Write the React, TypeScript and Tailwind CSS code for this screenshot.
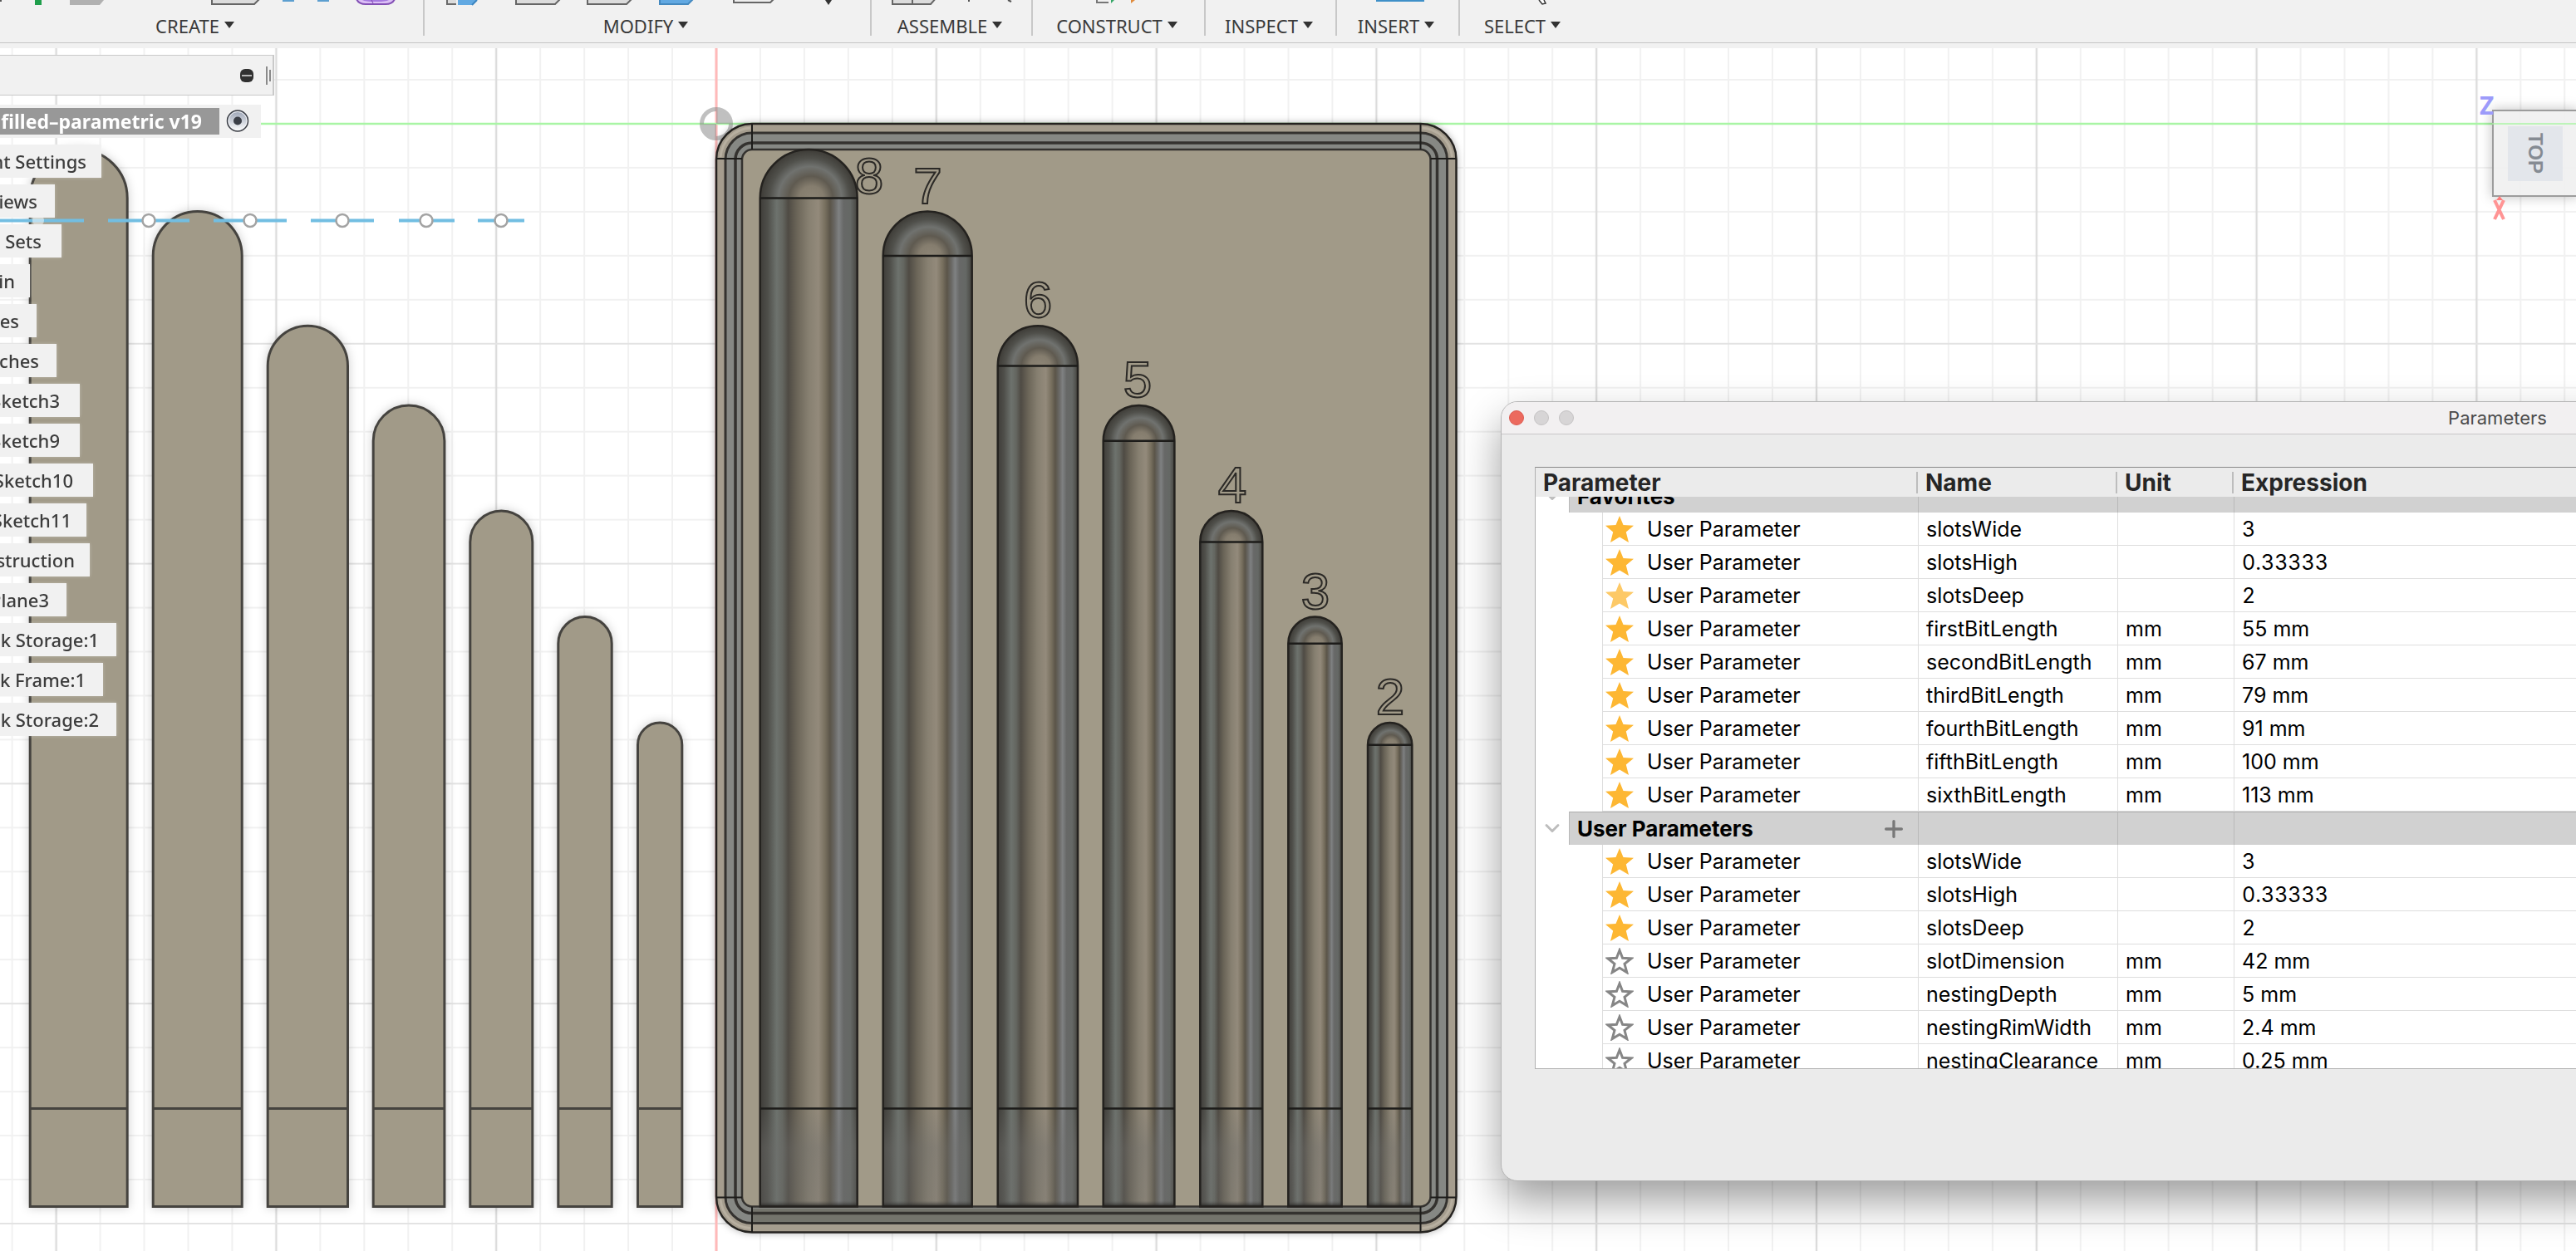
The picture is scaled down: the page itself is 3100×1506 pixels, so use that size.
import { useEffect, useRef, useState } from 'react';
import type { ReactNode } from 'react';
import { ChevronDown, Plus } from 'lucide-react';

interface Parameter {
  name: string;
  unit: string;
  expression: string;
  star: 'on' | 'faded' | 'off';
}

interface Slot {
  label: string;
  labelX: number;
  x: number;
  width: number;
  top: number;
}

const favorites: Parameter[] = [
  { name: 'slotsWide', unit: '', expression: '3', star: 'on' },
  { name: 'slotsHigh', unit: '', expression: '0.33333', star: 'on' },
  { name: 'slotsDeep', unit: '', expression: '2', star: 'faded' },
  { name: 'firstBitLength', unit: 'mm', expression: '55 mm', star: 'on' },
  { name: 'secondBitLength', unit: 'mm', expression: '67 mm', star: 'on' },
  { name: 'thirdBitLength', unit: 'mm', expression: '79 mm', star: 'on' },
  { name: 'fourthBitLength', unit: 'mm', expression: '91 mm', star: 'on' },
  { name: 'fifthBitLength', unit: 'mm', expression: '100 mm', star: 'on' },
  { name: 'sixthBitLength', unit: 'mm', expression: '113 mm', star: 'on' },
];

const userParameters: Parameter[] = [
  { name: 'slotsWide', unit: '', expression: '3', star: 'on' },
  { name: 'slotsHigh', unit: '', expression: '0.33333', star: 'on' },
  { name: 'slotsDeep', unit: '', expression: '2', star: 'on' },
  { name: 'slotDimension', unit: 'mm', expression: '42 mm', star: 'off' },
  { name: 'nestingDepth', unit: 'mm', expression: '5 mm', star: 'off' },
  { name: 'nestingRimWidth', unit: 'mm', expression: '2.4 mm', star: 'off' },
  { name: 'nestingClearance', unit: 'mm', expression: '0.25 mm', star: 'off' },
];

const treeItems = [
  { label: 'nt Settings', box: 'w-[122px] pr-[18px]' },
  { label: 'iews', box: 'w-[66px] pr-[21px]' },
  { label: 'Sets', box: 'w-[74px] pr-[24px]' },
  { label: 'in', box: 'w-[36px] pr-[18px]' },
  { label: 'es', box: 'w-[44px] pr-[21px]' },
  { label: 'ches', box: 'w-[68px] pr-[21px]' },
  { label: 'Sketch3', box: 'w-[96px] pr-[24px]' },
  { label: 'Sketch9', box: 'w-[96px] pr-[24px]' },
  { label: 'Sketch10', box: 'w-[112px] pr-[24px]' },
  { label: 'Sketch11', box: 'w-[104px] pr-[18px]' },
  { label: 'struction', box: 'w-[108px] pr-[18px]' },
  { label: 'Plane3', box: 'w-[80px] pr-[21px]' },
  { label: 'k Storage:1', box: 'w-[140px] pr-[21px]' },
  { label: 'k Frame:1', box: 'w-[124px] pr-[21px]' },
  { label: 'k Storage:2', box: 'w-[140px] pr-[21px]' },
];

// Model units are pixels from the origin marker
const slots: Slot[] = [
  { label: '8', labelX: 184, x: 52.7, width: 117, top: 31 },
  { label: '7', labelX: 254.5, x: 200.7, width: 107, top: 105.5 },
  { label: '6', labelX: 387, x: 338.7, width: 96.3, top: 243.3 },
  { label: '5', labelX: 507, x: 465.7, width: 85.7, top: 339 },
  { label: '4', labelX: 621, x: 582.3, width: 75, top: 466 },
  { label: '3', labelX: 721, x: 688.3, width: 64.4, top: 593.5 },
  { label: '2', labelX: 811, x: 784, width: 53.3, top: 721 },
];

const SLOT_BOTTOM = 1303.5;
const SLOT_FOOT = 1185.5;
const BODY_OFFSET = -878.5;

const dashes = [
  [-862, -761],
  [-732, -634],
  [-605, -517],
  [-488, -412],
  [-382, -315],
  [-287, -231],
];

function slotPath({ x, width, top }: Slot) {
  const r = width / 2;
  return `M${x} ${SLOT_BOTTOM}V${top + r}A${r} ${r} 0 0 1 ${x + width} ${top + r}V${SLOT_BOTTOM}Z`;
}

function ToolGroup({ label, className, children }: { label: string; className: string; children?: ReactNode }) {
  return (
    <div className={`flex h-[43px] shrink-0 flex-col border-[#c8c8c8] ${className}`}>
      <svg className="h-2 w-full" aria-hidden="true">
        {children}
      </svg>
      <button className="flex flex-1 items-end justify-center gap-[6px] pr-1 text-[22px] leading-6 text-[#3a3a3a]">
        {label}
        <svg className="mb-[9px] h-2 w-3" viewBox="0 0 12 8" aria-hidden="true">
          <path d="M0 0H12L6 8Z" fill="#333" />
        </svg>
      </button>
    </div>
  );
}

function Toolbar() {
  return (
    <header className="relative z-20 h-[58px] overflow-hidden bg-[#f1f1f1]">
      <div className="flex h-[52px] border-b border-[#c6c6c6]">
        <ToolGroup label="CREATE" className="-ml-9 w-[547px] border-r-2">
          <rect x="36" width="2" height="2" fill="#555" />
          <rect x="78" width="8" height="6" fill="#1f9e4b" />
          <path d="M120 0H161L156 6H120Z" fill="#b1b1b1" />
          <path d="M291 -3V5H342L350 -3" fill="#dcdcdc" stroke="#666" strokeWidth="2" />
          <path d="M376 0H390V2H376ZM418 0H432V2H418Z" fill="#5c9fd0" />
          <path d="M464 -4Q466 5 476 5H500Q510 5 512 -4" fill="#dcc0f6" stroke="#8350b5" strokeWidth="2" />
          <path d="M472 0Q476 2 486 2H490Q500 2 504 0Z" fill="#a679e0" />
          <path d="M483 0L485 4" stroke="#7c49b0" />
        </ToolGroup>
        <ToolGroup label="MODIFY" className="w-[538px] border-r-2">
          <path d="M27 -3V5H38" fill="none" stroke="#6b6b6b" strokeWidth="2" />
          <rect x="28" width="10" height="4" fill="#dcdcdc" />
          <path d="M40 0H63L57 6H40Z" fill="#62a9e2" />
          <path d="M57 6L63 0" stroke="#3a85c0" strokeWidth="2" />
          <path d="M110 -3V5H157L165 -3M196 -3V5H243L251 -3" fill="#dcdcdc" stroke="#666" strokeWidth="2" />
          <path d="M283 -3V5H317L325 -3" fill="#62a9e2" stroke="#4489bf" strokeWidth="2" />
          <path d="M372 -3V3H416L422 -3" fill="#eee" stroke="#666" strokeWidth="2" />
          <path d="M482 0H490L486 6Z" fill="#333" />
        </ToolGroup>
        <ToolGroup label="ASSEMBLE" className="w-[194px] border-r-2">
          <path d="M25 -3V5H71L78 -3M49 0V5" fill="#dcdcdc" stroke="#666" strokeWidth="2" />
          <path d="M117 0V2M164 0L168 2" stroke="#555" strokeWidth="2" />
        </ToolGroup>
        <ToolGroup label="CONSTRUCT" className="w-[208px] border-r-2">
          <path d="M77 -3V3H91" fill="none" stroke="#777" strokeWidth="2" />
          <path d="M94 0H98L94 4Z" fill="#37a768" />
          <path d="M118 0H123L118 4Z" fill="#e08b3c" />
        </ToolGroup>
        <ToolGroup label="INSPECT" className="w-[158px] border-r-2" />
        <ToolGroup label="INSERT" className="w-[148px] border-r-2">
          <rect x="47" width="58" height="2" fill="#3f90c8" />
        </ToolGroup>
        <ToolGroup label="SELECT" className="w-[154px]">
          <path d="M95 0L99 5L103 4L101 0" fill="#fff" stroke="#333" strokeWidth="1.5" />
        </ToolGroup>
      </div>
    </header>
  );
}

function FrameCorner({ transform }: { transform: string }) {
  return (
    <g transform={transform} fill="none">
      <path d="M43 0V31M0 42H31" stroke="#1d1c1a" strokeWidth="2" />
      <path d="M5 40A38 38 0 0 1 41 5" stroke="#c3bbab" strokeWidth="3" opacity="0.6" />
    </g>
  );
}

function Viewport() {
  return (
    <svg className="absolute inset-0 h-full w-full" role="img" aria-label="Bit storage model, top view">
      <defs>
        <pattern id="grid" width="264.8" height="264.8" patternUnits="userSpaceOnUse" patternTransform="translate(852 81)">
          <path
            d="M63 0V264.8M115.9 0V264.8M168.9 0V264.8M221.8 0V264.8M0 63H264.8M0 115.9H264.8M0 168.9H264.8M0 221.8H264.8"
            stroke="#f1f1f1"
            strokeWidth="2"
          />
          <path d="M10 0V264.8" stroke="#dcdcdc" strokeWidth="2.4" />
          <path d="M0 10H264.8" stroke="#e3e3e3" strokeWidth="2" />
        </pattern>
        <linearGradient id="bore">
          <stop offset="0" stopColor="#3f3d39" />
          <stop offset="0.08" stopColor="#4f4f4a" />
          <stop offset="0.17" stopColor="#6d726d" />
          <stop offset="0.23" stopColor="#646660" />
          <stop offset="0.29" stopColor="#4f4b44" />
          <stop offset="0.38" stopColor="#6b6558" />
          <stop offset="0.5" stopColor="#878071" />
          <stop offset="0.6" stopColor="#938a7b" />
          <stop offset="0.67" stopColor="#776f5e" />
          <stop offset="0.72" stopColor="#5b5549" />
          <stop offset="0.77" stopColor="#6a6966" />
          <stop offset="0.81" stopColor="#7f8182" />
          <stop offset="0.86" stopColor="#676867" />
          <stop offset="0.93" stopColor="#656865" />
          <stop offset="1" stopColor="#45443f" />
        </linearGradient>
        <radialGradient id="dome" cx="0.5" cy="0.5" r="0.5" fx="0.54" fy="0.5">
          <stop offset="0" stopColor="#8d8576" />
          <stop offset="0.25" stopColor="#857d6e" />
          <stop offset="0.45" stopColor="#5f5a50" />
          <stop offset="0.65" stopColor="#70726f" />
          <stop offset="0.82" stopColor="#50504b" />
          <stop offset="1" stopColor="#3d3b36" />
        </radialGradient>
        <linearGradient id="foot" x2="0" y2="1">
          <stop offset="0" stopColor="#6e6e6c" stopOpacity="0" />
          <stop offset="0.4" stopColor="#6e6e6c" stopOpacity="0.4" />
          <stop offset="0.94" stopColor="#6e6e6c" stopOpacity="0.3" />
          <stop offset="1" stopColor="#1f1e1c" stopOpacity="0.9" />
        </linearGradient>
      </defs>

      <rect width="100%" height="100%" fill="#fff" />
      <rect width="100%" height="100%" fill="url(#grid)" />

      <g transform="translate(862 91)">
        <path d="M0 -91V3000" stroke="#ffb9b9" strokeWidth="3" />
        <path d="M-862 0H6000" stroke="#a9f5a5" strokeWidth="2.5" />

        {/* origin marker */}
        <g fill="#8d8d8d" opacity="0.55">
          <circle r="17.5" fill="none" stroke="#8d8d8d" strokeWidth="5" />
          <path d="M0 0V-16A16 16 0 0 1 16 0ZM0 0V16A16 16 0 0 1 -16 0Z" />
        </g>

        {/* solid bodies */}
        <g className="drop-shadow-[0_0_6px_rgba(0,0,0,0.2)]">
          {slots.map((slot) => (
            <g key={slot.label} transform={`translate(${BODY_OFFSET} 0)`} stroke="#45433f" strokeWidth="3">
              <path d={slotPath(slot)} fill="#a19a88" />
              <path d={`M${slot.x} ${SLOT_FOOT}h${slot.width}`} />
            </g>
          ))}
        </g>

        {/* sketch line */}
        <g stroke="#72bee2" strokeWidth="4">
          {dashes.map(([from, to]) => (
            <path key={from} d={`M${from} 116.5H${to}`} />
          ))}
        </g>
        <circle cx="-816" cy="116.5" r="7" fill="#fff" opacity="0.5" />
        {[-683, -561, -450, -349, -259].map((cx) => (
          <circle key={cx} cx={cx} cy="116.5" r="7.5" fill="#fff" stroke="#a3a3a3" strokeWidth="2.5" />
        ))}

        {/* storage frame */}
        <g className="drop-shadow-[0_0_4px_rgba(0,0,0,0.3)]">
          <rect width="890.5" height="1334.5" rx="43" fill="#a59d8e" stroke="#24221f" strokeWidth="2.5" />
        </g>
        <rect x="11" y="11" width="868.5" height="1312.5" rx="32" fill="#868884" stroke="#34322f" strokeWidth="3" />
        <path d="M43 1306H847V1322H43Z" fill="#74746c" />
        <rect x="23" y="23" width="844.5" height="1288.5" rx="20" fill="none" stroke="#34322f" strokeWidth="3.5" />
        <rect x="31" y="31" width="828.5" height="1272.5" rx="12" fill="#a19a88" stroke="#34322f" strokeWidth="2.5" />
        <FrameCorner transform="" />
        <FrameCorner transform="translate(890.5 0) scale(-1 1)" />
        <FrameCorner transform="translate(0 1334.5) scale(1 -1)" />
        <FrameCorner transform="translate(890.5 1334.5) scale(-1 -1)" />

        {slots.map((slot) => {
          const r = slot.width / 2;
          return (
            <g key={slot.label}>
              <circle cx={slot.x + r} cy={slot.top + r} r={r} fill="url(#dome)" />
              <rect x={slot.x} y={slot.top + r} width={slot.width} height={SLOT_BOTTOM - slot.top - r} fill="url(#bore)" />
              <rect x={slot.x} y={SLOT_FOOT} width={slot.width} height={SLOT_BOTTOM - SLOT_FOOT} fill="url(#foot)" />
              <path d={slotPath(slot)} fill="none" stroke="#24221f" strokeWidth="2.5" />
              <path
                d={`M${slot.x} ${slot.top + r}h${slot.width}M${slot.x} ${SLOT_FOOT}h${slot.width}`}
                stroke="#1d1c1a"
                strokeWidth="2.5"
              />
              <text
                x={slot.labelX}
                y={slot.label === '8' ? 84 : slot.top - 10}
                textAnchor="middle"
                fill="#a19a88"
                stroke="#2b2926"
                strokeWidth="2"
                className="font-['Liberation_Sans',sans-serif] text-[62px]"
              >
                {slot.label}
              </text>
            </g>
          );
        })}
      </g>
    </svg>
  );
}

function Browser() {
  return (
    <aside className="relative w-[330px] pt-2 text-[22px] leading-[30px] font-medium text-[#3c3c3c]">
      <div className="flex h-[49px] items-center justify-end gap-[15px] border-y border-r-2 border-[#c9c9c9] bg-[#f1f1f1] pr-[2px]">
        <button aria-label="Collapse browser" className="flex h-4 w-4 items-center justify-center rounded-[6px] bg-[#303030]">
          <span className="h-[2px] w-3 bg-[#b5b5b5]" />
        </button>
        <div className="flex items-center gap-[2px]">
          <span className="h-[22px] w-[2px] bg-[#8a8a8a]" />
          <span className="h-[14px] w-[2px] bg-[#8a8a8a]" />
        </div>
      </div>

      <div className="mt-[11px] flex h-10 w-[314px] items-center bg-[#f1f1f1]">
        <div className="flex h-8 w-[264px] items-center justify-end overflow-hidden bg-[#989898] pr-[21px] text-[23px] font-bold whitespace-nowrap text-white">
          filled–parametric v19
        </div>
        <svg className="ml-2 h-7 w-7" viewBox="0 0 28 28" aria-hidden="true">
          <defs>
            <linearGradient id="radio" x2="0" y2="1">
              <stop offset="0" stopColor="#98a1b3" />
              <stop offset="1" stopColor="#fff" />
            </linearGradient>
          </defs>
          <circle cx="14" cy="13.5" r="12.5" fill="url(#radio)" stroke="#3a3d44" strokeWidth="1.5" />
          <circle cx="14" cy="13.5" r="11" fill="none" stroke="#f4f5f8" />
          <circle cx="14" cy="13.5" r="5" fill="#3b3f47" />
        </svg>
      </div>

      <ul className="mt-2 flex flex-col gap-2">
        {treeItems.map((item) => (
          <li
            key={item.label}
            className={`flex h-10 items-center justify-end overflow-hidden bg-[#f1f1f1] whitespace-nowrap shadow-[0_0_4px_rgba(255,255,255,0.3)] ${item.box}`}
          >
            {item.label}
          </li>
        ))}
      </ul>
    </aside>
  );
}

function ViewCube() {
  return (
    <div className="absolute top-[74px] -right-[3px] h-[105px] w-[104px]">
      <button className="flex h-full w-full items-center justify-center border-2 border-[#9c9c9c] bg-[#efefef]/90 shadow-[0_0_14px_rgba(0,0,0,0.25)]">
        <span className="flex h-[66px] w-[66px] items-center justify-center bg-[#e3e6eb] font-['Liberation_Sans',sans-serif] text-[24px] leading-6 font-bold text-[#858b93] [writing-mode:vertical-rl]">
          TOP
        </span>
      </button>
      <span className="absolute top-4 left-0 h-[2px] w-full bg-[#a9f5a5]/70" />
      <span className="absolute -top-5 -left-[15px] text-[30px] leading-[30px] font-bold text-[#9c9bfa]">Z</span>
      <svg className="absolute top-[104px] left-0 h-8 w-4" viewBox="0 0 16 32" aria-hidden="true">
        <path d="M9 0L5 5H13Z" fill="#ff7a7a" />
        <path d="M3 5L14 28M14 5L3 28" stroke="#ff9494" strokeWidth="4" />
      </svg>
    </div>
  );
}

function StarButton({ initial }: { initial: Parameter['star'] }) {
  const [star, setStar] = useState(initial);

  return (
    <button
      aria-label="Toggle favorite"
      onClick={() => setStar(star === 'off' ? 'on' : 'off')}
      className="shrink-0"
    >
      <svg className={`h-8 w-[34px] ${star === 'faded' ? 'opacity-75' : ''}`} viewBox="0 0 34 32">
        {star === 'off' ? (
          <path
            d="M17 3L20.6 12.2L31 12.9L23 19.3L25.8 29.6L17 24.3L8.2 29.6L11 19.3L3 12.9L13.4 12.2Z"
            fill="#fff"
            stroke="#868686"
            strokeWidth="3"
          />
        ) : (
          <path d="M17 0L21.5 11L34 11.7L24.8 19.6L28 32L17 25.5L6 32L9.2 19.6L0 11.7L12.5 11Z" fill="#fdb733" />
        )}
      </svg>
    </button>
  );
}

function GroupRow({ title, canAdd }: { title: string; canAdd?: boolean }) {
  const cell = 'h-10 border-t border-l border-t-[#adadad] border-l-[#b9b9b9] bg-[#d1d1d1] p-0';

  return (
    <tr>
      <td className="h-10 p-0">
        <button aria-label={`Collapse ${title}`} className="flex w-full justify-center">
          <ChevronDown className="h-7 w-7 text-[#bdbdbd]" strokeWidth={2.5} />
        </button>
      </td>
      <td colSpan={2} className={cell}>
        <div className="flex items-center justify-between pr-[13px] pl-[9px] text-[26px] leading-8 font-bold">
          {title}
          {canAdd && (
            <button aria-label="Add user parameter">
              <Plus className="h-8 w-8 text-[#787878]" strokeWidth={2.5} />
            </button>
          )}
        </div>
      </td>
      <td className={cell} />
      <td className={cell} />
      <td className={cell} />
    </tr>
  );
}

function ParameterRow({ parameter }: { parameter: Parameter }) {
  const cell = 'h-10 border-b border-l border-[#dedede] p-0 pl-[9px]';

  return (
    <tr>
      <td colSpan={2} className="p-0" />
      <td className="h-10 border-b border-l border-[#dedede] p-0 pl-[3px]">
        <div className="flex items-center gap-4">
          <StarButton initial={parameter.star} />
          User Parameter
        </div>
      </td>
      <td className={cell}>{parameter.name}</td>
      <td className={cell}>{parameter.unit}</td>
      <td className={`${cell} ${parameter.unit ? '' : 'tabular-nums'}`}>{parameter.expression}</td>
    </tr>
  );
}

function ParametersWindow() {
  const listRef = useRef<HTMLDivElement>(null);

  useEffect(() => {
    if (listRef.current) listRef.current.scrollTop = 21;
  }, []);

  const heading = 'sticky top-0 z-10 h-[35px] bg-[#ebebeb] p-0 text-left';

  return (
    <section className="absolute top-[425px] left-[1806px] w-[2399px] overflow-hidden rounded-[20px] border border-[#b5b5b5] bg-[#ebebeb] font-['Inter',sans-serif] shadow-[0_24px_50px_rgba(0,0,0,0.38)]">
      <div className="relative flex h-[39px] items-center gap-3 border-b border-[#c9c7c8] bg-[#f2f0f1] px-[9px]">
        <button aria-label="Close" className="h-[18px] w-[18px] rounded-full border border-[#dc5a50] bg-[#ec6a5e]" />
        <button aria-label="Minimize" className="h-[18px] w-[18px] rounded-full border border-[#c4c2c3] bg-[#d7d5d6]" />
        <button aria-label="Zoom" className="h-[18px] w-[18px] rounded-full border border-[#c4c2c3] bg-[#d7d5d6]" />
        <h2 className="absolute inset-x-0 text-center text-[22px] leading-7 text-[#4c4c4c]">Parameters</h2>
      </div>

      <div className="px-10 pt-[39px] pb-[134px]">
        <div
          ref={listRef}
          className="h-[725px] overflow-y-scroll border border-[#b0b0b0] border-t-[#8a8a8a] bg-white [scrollbar-width:none]"
        >
          <table className="w-full table-fixed border-separate border-spacing-0 text-[25px] leading-8 text-black">
            <colgroup>
              <col className="w-10" />
              <col className="w-10" />
              <col className="w-[380px]" />
              <col className="w-[240px]" />
              <col className="w-[140px]" />
              <col />
            </colgroup>
            <thead className="text-[28px] text-[#262626]">
              <tr>
                <th colSpan={3} className={heading}>
                  <div className="flex h-[26px] items-center border-r-2 border-[#bdbdbd] pl-[9px]">Parameter</div>
                </th>
                <th className={heading}>
                  <div className="flex h-[26px] items-center border-r-2 border-[#bdbdbd] pl-[9px]">Name</div>
                </th>
                <th className={heading}>
                  <div className="flex h-[26px] items-center border-r-2 border-[#bdbdbd] pl-[9px]">Unit</div>
                </th>
                <th className={heading}>
                  <div className="flex h-[26px] items-center pl-[9px]">Expression</div>
                </th>
              </tr>
            </thead>
            <tbody>
              <GroupRow title="Favorites" />
              {favorites.map((parameter) => (
                <ParameterRow key={parameter.name} parameter={parameter} />
              ))}
              <GroupRow title="User Parameters" canAdd />
              {userParameters.map((parameter) => (
                <ParameterRow key={parameter.name} parameter={parameter} />
              ))}
            </tbody>
          </table>
        </div>
      </div>
    </section>
  );
}

export default function App() {
  return (
    <div className="flex h-screen flex-col overflow-hidden bg-white font-['Noto_Sans',sans-serif]">
      <Toolbar />
      <main className="relative flex-1 overflow-hidden">
        <Viewport />
        <Browser />
        <ViewCube />
        <ParametersWindow />
      </main>
    </div>
  );
}
